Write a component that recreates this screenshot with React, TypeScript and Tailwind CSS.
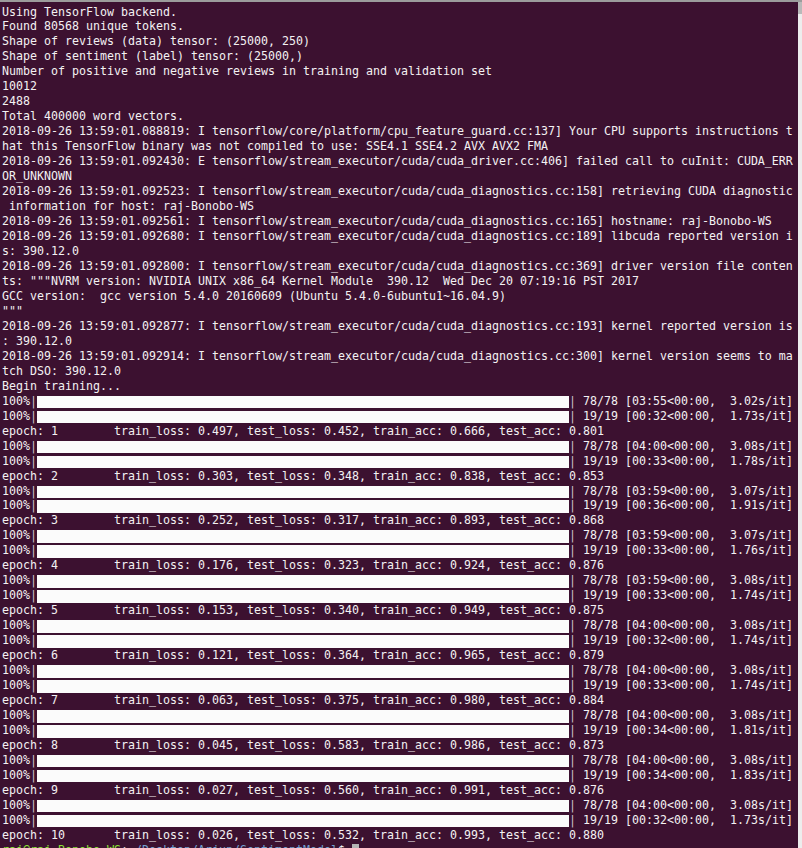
const headLines = [
  "Using TensorFlow backend.",
  "Found 80568 unique tokens.",
  "Shape of reviews (data) tensor: (25000, 250)",
  "Shape of sentiment (label) tensor: (25000,)",
  "Number of positive and negative reviews in training and validation set",
  "10012",
  "2488",
  "Total 400000 word vectors.",
  "2018-09-26 13:59:01.088819: I tensorflow/core/platform/cpu_feature_guard.cc:137] Your CPU supports instructions t",
  "hat this TensorFlow binary was not compiled to use: SSE4.1 SSE4.2 AVX AVX2 FMA",
  "2018-09-26 13:59:01.092430: E tensorflow/stream_executor/cuda/cuda_driver.cc:406] failed call to cuInit: CUDA_ERR",
  "OR_UNKNOWN",
  "2018-09-26 13:59:01.092523: I tensorflow/stream_executor/cuda/cuda_diagnostics.cc:158] retrieving CUDA diagnostic",
  " information for host: raj-Bonobo-WS",
  "2018-09-26 13:59:01.092561: I tensorflow/stream_executor/cuda/cuda_diagnostics.cc:165] hostname: raj-Bonobo-WS",
  "2018-09-26 13:59:01.092680: I tensorflow/stream_executor/cuda/cuda_diagnostics.cc:189] libcuda reported version i",
  "s: 390.12.0",
  "2018-09-26 13:59:01.092800: I tensorflow/stream_executor/cuda/cuda_diagnostics.cc:369] driver version file conten",
  'ts: """NVRM version: NVIDIA UNIX x86_64 Kernel Module  390.12  Wed Dec 20 07:19:16 PST 2017',
  "GCC version:  gcc version 5.4.0 20160609 (Ubuntu 5.4.0-6ubuntu1~16.04.9)",
  '"""',
  "2018-09-26 13:59:01.092877: I tensorflow/stream_executor/cuda/cuda_diagnostics.cc:193] kernel reported version is",
  ": 390.12.0",
  "2018-09-26 13:59:01.092914: I tensorflow/stream_executor/cuda/cuda_diagnostics.cc:300] kernel version seems to ma",
  "tch DSO: 390.12.0",
  "Begin training...",
];

// [train time, train rate, test time, test rate, train_loss, test_loss, train_acc, test_acc]
const epochs = [
  ["03:55", "3.02", "00:32", "1.73", "0.497", "0.452", "0.666", "0.801"],
  ["04:00", "3.08", "00:33", "1.78", "0.303", "0.348", "0.838", "0.853"],
  ["03:59", "3.07", "00:36", "1.91", "0.252", "0.317", "0.893", "0.868"],
  ["03:59", "3.07", "00:33", "1.76", "0.176", "0.323", "0.924", "0.876"],
  ["03:59", "3.08", "00:33", "1.74", "0.153", "0.340", "0.949", "0.875"],
  ["04:00", "3.08", "00:32", "1.74", "0.121", "0.364", "0.965", "0.879"],
  ["04:00", "3.08", "00:33", "1.74", "0.063", "0.375", "0.980", "0.884"],
  ["04:00", "3.08", "00:34", "1.81", "0.045", "0.583", "0.986", "0.873"],
  ["04:00", "3.08", "00:34", "1.83", "0.027", "0.560", "0.991", "0.876"],
  ["04:00", "3.08", "00:32", "1.73", "0.026", "0.532", "0.993", "0.880"],
];

function Line({ children }: { children?: React.ReactNode }) {
  return <div className="h-[14.98px] leading-[14.98px] whitespace-pre">{children}</div>;
}

function Bar({ tail }: { tail: string }) {
  return (
    <div className="flex h-[14.98px] items-start leading-[14.98px] whitespace-pre">
      <span>100%</span>
      <span className="text-[#c9c3c7]">|</span>
      <div className="mt-[2px] h-[12.5px] w-[532px] bg-[#fbfbfb]" />
      <span className="text-[#c9c3c7]">|</span>
      <span>{tail}</span>
    </div>
  );
}

export default function App() {
  return (
    <div className="flex h-[848px] w-[802px] overflow-hidden border-t-2 border-[#9c9c9c] bg-[#3c1130] text-[11.63px] text-[#f4f1f3] [font-family:'DejaVu_Sans_Mono',monospace]">
      <div className="flex-1 pl-[2px] pt-[2.5px]">
        {headLines.map((l, i) => (
          <Line key={i}>{l}</Line>
        ))}
        {epochs.map((e, i) => (
          <div key={i}>
            <Bar tail={` 78/78 [${e[0]}<00:00,  ${e[1]}s/it]`} />
            <Bar tail={` 19/19 [${e[2]}<00:00,  ${e[3]}s/it]`} />
            <Line>
              {`epoch: ${i + 1}`.padEnd(16, " ")}
              {`train_loss: ${e[4]}, test_loss: ${e[5]}, train_acc: ${e[6]}, test_acc: ${e[7]}`}
            </Line>
          </div>
        ))}
        <div className="flex h-[14.98px] leading-[14.98px] whitespace-pre">
          <span className="text-[#8ae234]">raj@raj-Bonobo-WS</span>
          <span>:</span>
          <span className="text-[#729fcf]">~/Desktop/Arjun/SentimentModel</span>
          <span>$ </span>
          <span className="mt-[1px] h-[14px] w-[7px] bg-[#b4b4b4]" />
        </div>
      </div>
      <div className="flex w-[4px] flex-col">
        <div className="h-[12px] bg-[#b9b9b9]" />
        <div className="flex-1 bg-[#ededed]" />
      </div>
    </div>
  );
}
